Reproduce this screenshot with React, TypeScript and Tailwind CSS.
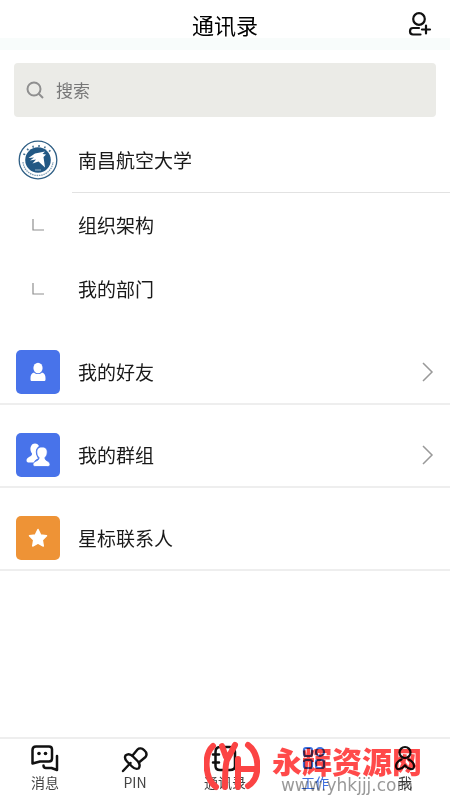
import React from 'react';

interface IconRowProps {
    label: string;
    color: string;
    icon: React.ReactNode;
    arrow?: boolean;
}

interface TabProps {
    label: string;
    icon: React.ReactNode;
    active?: boolean;
}

const CornerMark = () => (
    <svg className="w-3 h-3" viewBox="0 0 12 12" fill="none" stroke="#8f8f8f" strokeWidth="1.2">
        <path d="M1 0V11H12" />
    </svg>
);

const SchoolBadge = () => (
    <svg className="w-10 h-10" viewBox="0 0 40 40" fill="none">
        <circle cx="20" cy="20" r="18.8" stroke="#2f5f85" strokeWidth="1.3" />
        <path d="M6 15C10 3 30 3 34 15" stroke="#3f6d90" strokeWidth="2" strokeDasharray="1.5 4.5" />
        <path d="M5 22C7 40 33 40 35 22" stroke="#7d9cb4" strokeWidth="1.3" strokeDasharray="1.5 0.8" />
        <circle cx="20" cy="20" r="12.8" fill="#225884" />
        <path d="M10.500 18L17 13.500L27 11.500L24.500 14L28 14.500L25.500 17L27 27.500L20.500 21.500L14.500 23.500L18 19.500L12 20.500L16 17.500Z" fill="#fff" />
        <path d="M17 30H23" stroke="#9db7cb" strokeWidth="1" />
    </svg>
);

const AddUserIcon = () => (
    <svg className="w-6 h-6" viewBox="0 0 24 24" fill="none" stroke="#111" strokeWidth="2.200" strokeLinecap="round">
        <circle cx="11" cy="7" r="5.800" />
        <path d="M11 16H5C1 16 1 22.500 5 22.500H12.500" />
        <path d="M14 17.500H22M18 13.500V21.500" />
    </svg>
);

const FriendIcon = () => (
    <svg className="w-6 h-6" viewBox="0 0 24 24" fill="#fff">
        <ellipse cx="12" cy="8" rx="4.600" ry="5.300" />
        <path d="M8 12.500C5.500 13.500 4.500 15 4.500 18V19.500C4.500 20.600 5.200 21 6 21H18C18.800 21 19.500 20.600 19.500 19.500V18C19.500 15 18.500 13.500 16 12.500C14 14.500 10 14.500 8 12.500Z" />
    </svg>
);

const GroupIcon = () => (
    <svg className="w-6 h-6" viewBox="0 0 24 24" fill="#fff">
        <path d="M9 0.500C5.500 0.500 4 4 4.500 7C4.700 8.500 5.300 9.500 6 10.500C6.500 14 0.500 13.500 0.500 17.500C0.500 19 1.500 19.500 3 19.500H8C8 18 10 16.500 12 15.500C9 10 9 6 13 3C12 1.300 10.800 0.500 9 0.500Z" />
        <path d="M16 4C12 4 10.500 6.500 10.800 10C11 12 12 13.500 13 14.500C13.500 18.500 7 17.500 7 21.500C7 23 8 23.500 10 23.500H21.500C23.500 23.500 24 22.500 24 21.500C24 17.500 18.500 18.500 19 14.500C20 13.500 21 12 21.200 10C21.500 6.500 20 4 16 4Z" stroke="#4873ea" strokeWidth="0.800" />
    </svg>
);

const StarIcon = () => (
    <svg className="w-6 h-6" viewBox="0 0 24 24" fill="#fff" stroke="#fff" strokeWidth="1.500" strokeLinejoin="round">
        <path d="M12 3.500L14.700 9L20.500 9.800L16.300 14L17.300 20L12 17.200L6.700 20L7.700 14L3.500 9.800L9.300 9Z" />
    </svg>
);

const MessageIcon = () => (
    <svg className="w-7 h-7" viewBox="0 0 28 28" fill="none" stroke="#111" strokeWidth="2.500" strokeLinecap="round" strokeLinejoin="round">
        <path d="M5 1.500H18C20 1.500 21 2.500 21 4.500V13.500C21 15.500 20 16.500 18 16.500H9L1.500 18.500V5C1.500 2.500 3 1.500 5 1.500Z" />
        <path d="M26 11V25L20.500 23H15C13 23 12.500 22 12.500 20.500" />
        <circle cx="8" cy="8.500" r="1.800" fill="#111" stroke="none" />
        <circle cx="14.500" cy="8.500" r="1.800" fill="#111" stroke="none" />
    </svg>
);

const PinIcon = () => (
    <svg className="w-7 h-7" viewBox="0 0 28 28" fill="none" stroke="#111" strokeWidth="2.400" strokeLinecap="round" strokeLinejoin="round">
        <path d="M2 26L9.500 18" />
        <path d="M4.500 10.500C7 8.500 10 9.500 12 11.500L17 16.500C19 19 19 21.500 17.500 23.500C15 24.500 13 23.500 11 21.500L6 16.500C4 14.500 3.500 12.500 4.500 10.500Z" />
        <path d="M11.500 10.500L16.500 4.500C20 1 28 7 24.500 12L18.500 17" />
    </svg>
);

const ContactsIcon = () => (
    <svg className="w-7 h-7" viewBox="0 0 28 28" fill="none" stroke="#111" strokeWidth="2.500" strokeLinecap="round" strokeLinejoin="round">
        <path d="M9 2H19C22 2 24 4 24 7V21C24 24 22 25 19 25H9C6 25 4.500 24 4.500 21V7C4.500 4 6 2 9 2Z" />
        <path d="M2 9.500H8M2 17.500H8" />
    </svg>
);

const WorkIcon = () => (
    <svg className="w-7 h-7" viewBox="0 0 28 28" fill="none" stroke="#3d6fe0" strokeWidth="2.200">
        <rect x="3" y="3" width="8" height="8" rx="2" />
        <circle cx="19" cy="7" r="4" />
        <rect x="3" y="15" width="8" height="8" rx="2" />
        <rect x="15" y="15" width="8" height="8" rx="2" />
    </svg>
);

const MeIcon = () => (
    <svg className="w-7 h-7" viewBox="0 0 28 28" fill="none" stroke="#111" strokeWidth="2.200" strokeLinecap="round">
        <circle cx="14" cy="7.500" r="5.500" />
        <path d="M10.500 14.500C7 16 5 18.500 5 21C5 25.500 10 25 14 20.500C18 25 23 25.500 23 21C23 18.500 21 16 17.500 14.500" />
    </svg>
);

const IconRow: React.FC<IconRowProps> = ({ label, color, icon, arrow }) => (
    <li className="border-b-2 border-[#eeeeee]">
        <button type="button" className="flex w-full items-center px-4 pt-7 pb-[9px] text-left">
            <span className={`flex h-11 w-11 items-center justify-center rounded-[5px] ${color}`}>{icon}</span>
            <span className="ml-[18px] flex-1">{label}</span>
            {arrow && (
                <svg className="w-3 h-5" viewBox="0 0 12 20" fill="none" stroke="#999" strokeWidth="1.500">
                    <path d="M1 1L10 10L1 19" />
                </svg>
            )}
        </button>
    </li>
);

const Tab: React.FC<TabProps> = ({ label, icon, active }) => (
    <button type="button" className={`flex flex-1 flex-col items-center pt-1.5 text-sm leading-[18px] ${active ? 'text-[#3d6fe0]' : 'text-[#444]'}`}>
        {icon}
        <span>{label}</span>
    </button>
);

const Watermark = () => (
    <div className="pointer-events-none absolute top-0 right-7 flex items-start gap-3">
        <svg className="mt-0.5 h-[50px] w-[56px]" viewBox="0 0 56 50" fill="none" stroke="#fb4444" strokeWidth="6" strokeLinecap="round" strokeLinejoin="round">
            <path d="M9 5C0 13 0 37 12 46" />
            <path d="M18 5L22 16M31 4L23 19Q21 24 21 46" />
            <path d="M34 18V46M34 28H52" />
            <path d="M44 4C56 13 57 37 44 45" />
        </svg>
        <div className="flex flex-col items-center pt-1 mix-blend-multiply">
            <span className="text-[30px] leading-[34px] font-black text-[#ff4a4a]">永辉资源网</span>
            <span className="font-['DejaVu_Sans',sans-serif] text-[17px] leading-4 text-[#999]">www.yhkjjj.com</span>
        </div>
    </div>
);

const App: React.FC = () => {
    return (
        <div className="flex min-h-screen flex-col bg-white font-['Noto_Sans_CJK_SC','Liberation_Sans',sans-serif] text-[#1a1a1a]">
            <header className="grid grid-cols-[1fr_auto_1fr] items-center px-[18px] pt-3 pb-0.5">
                <h1 className="col-start-2 text-[22px] leading-6 text-black">通讯录</h1>
                <button type="button" aria-label="添加联系人" className="justify-self-end">
                    <AddUserIcon />
                </button>
            </header>
            <div className="h-3 bg-[#f8fcfb]" />

            <main className="flex-1 text-[19px] leading-7">
                <label className="mx-[14px] mt-[13px] flex h-[54px] items-center rounded bg-[#ebebe7] pl-3">
                    <svg className="w-[18px] h-[18px]" viewBox="0 0 18 18" fill="none" stroke="#8f8f8f" strokeWidth="2">
                        <circle cx="8" cy="8" r="6.500" />
                        <path d="M12.500 12.500L17 17" />
                    </svg>
                    <input
                        type="search"
                        placeholder="搜索"
                        aria-label="搜索"
                        className="ml-3 min-w-0 flex-1 bg-transparent text-[17px] leading-6 placeholder:text-[#777] focus:outline-none"
                    />
                </label>

                <section className="mt-[11px]">
                    <div className="flex h-16 items-center pl-[18px]">
                        <SchoolBadge />
                        <h2 className="ml-5">南昌航空大学</h2>
                    </div>
                    <hr className="ml-[72px] border-[#e2e2e2]" />
                    <ul>
                        {['组织架构', '我的部门'].map(name => (
                            <li key={name}>
                                <button type="button" className="flex h-16 w-full items-center pl-8 text-left">
                                    <CornerMark />
                                    <span className="ml-[34px]">{name}</span>
                                </button>
                            </li>
                        ))}
                    </ul>
                </section>

                <ul className="mt-px">
                    <IconRow label="我的好友" color="bg-[#4873ea]" icon={<FriendIcon />} arrow />
                    <IconRow label="我的群组" color="bg-[#4873ea]" icon={<GroupIcon />} arrow />
                    <IconRow label="星标联系人" color="bg-[#ee9336]" icon={<StarIcon />} />
                </ul>
            </main>

            <nav className="relative flex h-[63px] border-t-2 border-[#eeeeee]">
                <Tab label="消息" icon={<MessageIcon />} />
                <Tab label="PIN" icon={<PinIcon />} />
                <Tab label="通讯录" icon={<ContactsIcon />} />
                <Tab label="工作" icon={<WorkIcon />} active />
                <Tab label="我" icon={<MeIcon />} />
                <Watermark />
            </nav>
        </div>
    );
};

export default App;
